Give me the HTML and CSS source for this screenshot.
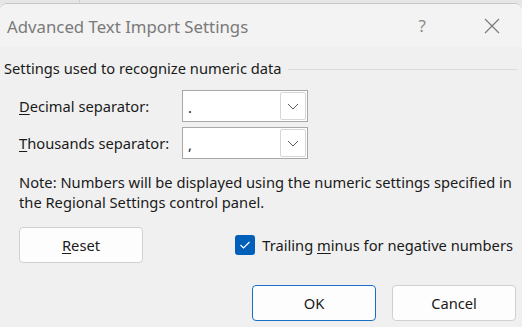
FILE: index.html
```html
<!DOCTYPE html>
<html>
<head>
<meta charset="utf-8">
<link rel="stylesheet" href="styles.css">
</head>
<body>
<div class="strip"><span class="strip-line"></span></div>
<div class="dialog">
  <div class="titlebar">
    <span class="title">Advanced Text Import Settings</span>
    <span class="help">?</span>
    <svg class="close" width="16" height="16" viewBox="0 0 16 16"><path d="M1 1 L15 15 M15 1 L1 15" stroke="#7a7a7a" stroke-width="1.2" fill="none"/></svg>
  </div>
  <div class="body">
    <div class="group-head">
      <span class="group-label">Settings used to recognize numeric data</span>
      <span class="group-line"></span>
    </div>
    <div class="rows">
      <label class="row-label"><u>D</u>ecimal separator:</label>
      <div class="combo">
        <span class="combo-value">.</span>
        <span class="combo-btn"><svg width="12" height="7" viewBox="0 0 12 7"><path d="M1 1 L6 6 L11 1" stroke="#5a5a5a" stroke-width="1" fill="none"/></svg></span>
      </div>
      <label class="row-label"><u>T</u>housands separator:</label>
      <div class="combo">
        <span class="combo-value">,</span>
        <span class="combo-btn"><svg width="12" height="7" viewBox="0 0 12 7"><path d="M1 1 L6 6 L11 1" stroke="#5a5a5a" stroke-width="1" fill="none"/></svg></span>
      </div>
    </div>
    <p class="note">Note: Numbers will be displayed using the numeric settings specified in the Regional Settings control panel.</p>
    <div class="reset-row">
      <button class="btn"><u>R</u>eset</button>
      <label class="check">
        <span class="box"><svg width="12" height="10" viewBox="0 0 12 10"><path d="M1.5 5 L4.5 8 L10.5 2" stroke="#fff" stroke-width="1.2" fill="none"/></svg></span>
        <span>Trailing <u>m</u>inus for negative numbers</span>
      </label>
    </div>
    <div class="footer">
      <button class="btn primary">OK</button>
      <button class="btn">Cancel</button>
    </div>
  </div>
</div>
</body>
</html>
```
FILE: styles.css
```css
* { box-sizing: border-box; }
html, body {
  margin: 0;
  padding: 0;
  width: 522px;
  height: 327px;
  overflow: hidden;
  background: #e9e9e9;
  font-family: "Noto Sans", "Open Sans", sans-serif;
  font-size: 14.7px;
  color: #1a1a1a;
}
.strip {
  height: 3px;
  background: #e6e6e6;
  display: flex;
}
.strip-line {
  margin-left: 79px;
  width: 1px;
  background: #d2d2d2;
}
.dialog {
  height: 324px;
  background: #f0f0f0;
  border-top: 1px solid #c6c6c6;
  border-radius: 7px 7px 0 0;
  overflow: hidden;
}
.titlebar {
  height: 43px;
  background: #f3f3f3;
  display: flex;
  align-items: center;
  padding-left: 7px;
}
.title {
  font-size: 16.8px;
  color: #7a7a7a;
  flex: 1;
  margin-top: 1px;
}
.help {
  font-size: 17px;
  color: #8a8a8a;
  margin-right: 58px;
}
.close {
  margin-right: 22px;
}
.body {
  padding: 0 5px 0 4px;
}
.group-head {
  display: flex;
  align-items: center;
  height: 20px;
  margin-top: 11px;
}
.group-label {
  white-space: nowrap;
}
.group-line {
  flex: 1;
  height: 1px;
  background: #dcdcdc;
  margin-left: 6px;
  margin-top: 2px;
}
.rows {
  display: grid;
  grid-template-columns: 163px 126px;
  row-gap: 5px;
  margin-top: 12px;
  margin-left: 15px;
  align-items: center;
}
.row-label u, .btn u, .check u { text-decoration-thickness: 1px; text-underline-offset: 2px; }
.combo {
  height: 32px;
  background: #fff;
  border: 1px solid #a8a8a8;
  display: flex;
  align-items: center;
  padding: 1px;
}
.combo-value {
  flex: 1;
  padding-left: 4px;
  margin-top: 2px;
}
.combo-btn {
  width: 26px;
  height: 28px;
  border: 1px solid #d6d6d6;
  border-radius: 2px;
  display: flex;
  align-items: center;
  justify-content: center;
}
.note {
  margin: 13px 0 0 15px;
  line-height: 20px;
}
.reset-row {
  display: flex;
  align-items: center;
  justify-content: space-between;
  margin-top: 15px;
  margin-left: 15px;
  padding-right: 4px;
}
.btn {
  width: 124px;
  height: 36px;
  background: #fdfdfd;
  border: 1px solid #d0d0d0;
  border-radius: 4px;
  font-family: inherit;
  font-size: 14.7px;
  color: #1a1a1a;
  padding: 0;
}
.btn.primary {
  border-color: #1a6fc4;
}
.check {
  display: flex;
  align-items: center;
  gap: 7px;
}
.box {
  width: 20px;
  height: 20px;
  border-radius: 3px;
  background: #005fb8;
  display: flex;
  align-items: center;
  justify-content: center;
}
.footer {
  display: flex;
  justify-content: flex-end;
  gap: 16px;
  margin-top: 22px;
  padding-right: 1px;
}
```
